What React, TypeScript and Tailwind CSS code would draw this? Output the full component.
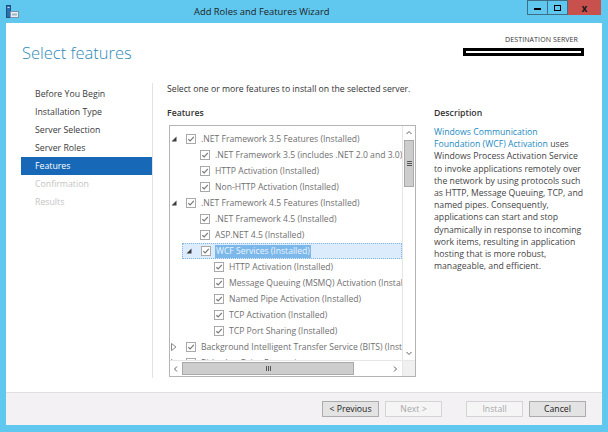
import React from 'react';

type Row = {
  level: number;
  label: string;
  expander?: 'open' | 'closed';
  checked?: boolean;
  selected?: boolean;
};

const rows: Row[] = [
  {level: 0, label: '.NET Framework 3.5 Features (Installed)', expander: 'open'},
  {level: 1, label: '.NET Framework 3.5 (includes .NET 2.0 and 3.0) (Installed)'},
  {level: 1, label: 'HTTP Activation (Installed)'},
  {level: 1, label: 'Non-HTTP Activation (Installed)'},
  {level: 0, label: '.NET Framework 4.5 Features (Installed)', expander: 'open'},
  {level: 1, label: '.NET Framework 4.5 (Installed)'},
  {level: 1, label: 'ASP.NET 4.5 (Installed)'},
  {level: 1, label: 'WCF Services (Installed)', expander: 'open', selected: true},
  {level: 2, label: 'HTTP Activation (Installed)'},
  {level: 2, label: 'Message Queuing (MSMQ) Activation (Installed)'},
  {level: 2, label: 'Named Pipe Activation (Installed)'},
  {level: 2, label: 'TCP Activation (Installed)'},
  {level: 2, label: 'TCP Port Sharing (Installed)'},
  {level: 0, label: 'Background Intelligent Transfer Service (BITS) (Installed)', expander: 'closed'},
  {level: 0, label: 'BitLocker Drive Encryption', expander: 'closed', checked: false},
];

const steps = [
  {label: 'Before You Begin', state: 'done'},
  {label: 'Installation Type', state: 'done'},
  {label: 'Server Selection', state: 'done'},
  {label: 'Server Roles', state: 'done'},
  {label: 'Features', state: 'active'},
  {label: 'Confirmation', state: 'off'},
  {label: 'Results', state: 'off'},
];

function Check({checked = true}: {checked?: boolean}) {
  return (
    <svg width="10" height="10" viewBox="0 0 10 10" className="shrink-0" aria-hidden="true">
      <rect x="0.5" y="0.5" width="9" height="9" fill="#fff" stroke="#a9a9a9" />
      {checked && (
        <polyline points="2.3 5.2 4.2 7 7.8 2.8" fill="none" stroke="#7b7b7b" strokeWidth="1.2" />
      )}
    </svg>
  );
}

function Expander({state}: {state?: 'open' | 'closed'}) {
  return (
    <div className="w-[16px] h-[16px] flex items-center pl-[1px] shrink-0">
      {state === 'open' && (
        <svg width="6" height="6" viewBox="0 0 6 6" aria-hidden="true">
          <polygon points="5.5 0.5 5.5 5.5 0.5 5.5" fill="#3c3c3c" />
        </svg>
      )}
      {state === 'closed' && (
        <svg width="6" height="8" viewBox="0 0 6 8" aria-hidden="true">
          <polygon points="0.5 0.5 5 4 0.5 7.5" fill="none" stroke="#8a8a8a" />
        </svg>
      )}
    </div>
  );
}

function Arrow({dir}: {dir: 'up' | 'down' | 'left' | 'right'}) {
  const pts = {
    up: '1.5 5 4 2.5 6.5 5',
    down: '1.5 3 4 5.5 6.5 3',
    left: '5 1.5 2.5 4 5 6.5',
    right: '3 1.5 5.5 4 3 6.5',
  }[dir];
  return (
    <svg width="8" height="8" viewBox="0 0 8 8" aria-hidden="true">
      <polyline points={pts} fill="none" stroke="#606060" strokeWidth="1" />
    </svg>
  );
}

function WinButton({
  label,
  disabled,
  className = '',
}: {
  label: string;
  disabled?: boolean;
  className?: string;
}) {
  return (
    <button
      type="button"
      className={
        disabled
          ? `w-[57px] h-[16px] border border-[#d4d4d4] bg-[#f5f5f5] text-[#a8a8a8] text-[8.7px] leading-[14px] ${className}`
          : `w-[57px] h-[16px] border border-[#acacac] bg-[#e3e3e3] text-[#222] text-[8.7px] leading-[14px] ${className}`
      }
    >
      {label}
    </button>
  );
}

export default function App() {
  return (
    <div className="w-[608px] h-[432px] bg-[#60c7ee] flex flex-col font-['Open_Sans',sans-serif] overflow-hidden">
      {/* Title bar */}
      <div className="flex h-[23px] shrink-0">
        <div className="w-[194px] pl-[6px] pt-[5px]">
          <svg width="13" height="13" viewBox="0 0 13 13" aria-hidden="true">
            <rect x="0.5" y="0.5" width="4" height="12" fill="#2a6fb0" stroke="#1b4f84" />
            <rect x="1.5" y="2" width="2" height="1" fill="#cfe6fa" />
            <rect x="4.5" y="6.5" width="8" height="6" fill="#e8eef3" stroke="#7b93a8" />
            <rect x="6" y="8.5" width="5" height="2" fill="#9fb6c8" />
          </svg>
        </div>
        <div className="pt-[5px] text-[9.4px] leading-[13px] text-[#1e1e1e]">
          Add Roles and Features Wizard
        </div>
        <div className="flex-1" />
        <div className="flex h-[15px] mr-[7px]">
          <div className="w-[21px] h-[15px] border border-[#3f6f86] flex items-end justify-center pb-[4px]">
            <div className="w-[7px] h-[2px] bg-black" />
          </div>
          <div className="w-[20px] h-[15px] border border-l-0 border-[#3f6f86] flex items-center justify-center">
            <div className="w-[7px] h-[6px] border-[1.5px] border-black" />
          </div>
          <div className="w-[33px] h-[15px] bg-[#c8514e] flex items-center justify-center text-[10px] font-bold leading-none text-[#1a1a1a]">
            x
          </div>
        </div>
      </div>

      {/* Client area */}
      <div className="flex-1 mx-[6px] mb-[7px] bg-white flex flex-col">
        {/* Header */}
        <div className="h-[60px] shrink-0 flex justify-between">
          <div className="pl-[16px] pt-[19px] text-[16.5px] leading-[22px] font-light text-[#2f8bb8]">
            Select features
          </div>
          <div className="flex flex-col items-end pr-[18px] pt-[12px]">
            <div className="text-[7px] leading-[10px] text-[#333] mr-[6px] tracking-[0.1px]">
              DESTINATION SERVER
            </div>
            <div className="mt-[3px] w-[121px] h-[8px] bg-black flex items-center px-[3px]">
              <div className="h-[2px] w-full bg-white" />
            </div>
          </div>
        </div>

        {/* Body */}
        <div className="h-[309px] shrink-0 flex">
          {/* Steps */}
          <div className="ml-[15px] w-[131px] pt-[2px] flex flex-col">
            {steps.map((s) => (
              <div
                key={s.label}
                className={
                  s.state === 'active'
                    ? 'h-[18px] pl-[14px] text-[8.75px] leading-[18px] bg-[#1769b8] text-white'
                    : s.state === 'off'
                      ? 'h-[18px] pl-[14px] text-[8.75px] leading-[18px] text-[#c4c4c4]'
                      : 'h-[18px] pl-[14px] text-[8.75px] leading-[18px] text-[#3a3a3a]'
                }
              >
                {s.label}
              </div>
            ))}
          </div>
          <div className="w-[1px] h-[295px] bg-[#e2e2e2]" />

          {/* Main */}
          <div className="pl-[14px] flex flex-col">
            <div className="h-[12px] text-[8.7px] leading-[12px] text-[#333]">
              Select one or more features to install on the selected server.
            </div>
            <div className="flex mt-[12px]">
              {/* Features tree */}
              <div className="flex flex-col">
                <div className="h-[12px] text-[8.7px] leading-[12px] font-semibold text-[#333]">
                  Features
                </div>
                <div className="mt-[6px] ml-[2px] w-[247px] h-[252px] border border-[#b4b4b4] flex flex-col">
                  <div className="flex h-[234px]">
                    <div className="w-[232px] overflow-hidden pt-[5px]">
                      {rows.map((r, i) => (
                        <div key={i} className="flex h-[16px]">
                          <div
                            className={
                              r.level === 0 ? 'w-0 shrink-0' : r.level === 1 ? 'w-[14px] shrink-0' : 'w-[28px] shrink-0'
                            }
                          />
                          <div
                            className={
                              r.selected
                                ? 'flex-1 flex items-center ml-[-2px] pl-[2px] bg-[#dcecfc] border border-dotted border-[#7fb3e0] min-w-0'
                                : 'flex-1 flex items-center min-w-0'
                            }
                          >
                            <Expander state={r.expander} />
                            <Check checked={r.checked !== false} />
                            <span
                              className={
                                r.selected
                                  ? 'ml-[4px] px-[1px] text-[8.6px] leading-[13px] whitespace-nowrap bg-[#7db8ea] text-[#e9f4fd]'
                                  : 'ml-[5px] text-[8.6px] leading-[13px] whitespace-nowrap text-[#707070]'
                              }
                            >
                              {r.label}
                            </span>
                          </div>
                        </div>
                      ))}
                    </div>
                    {/* Vertical scrollbar */}
                    <div className="w-[13px] flex flex-col border-l border-[#e6e6e6]">
                      <div className="h-[14px] flex items-center justify-center">
                        <Arrow dir="up" />
                      </div>
                      <div className="h-[47px] mx-[1px] bg-[#cdcdcd] border border-[#a9a9a9] flex flex-col items-center justify-center gap-[1px]">
                        <div className="w-[5px] h-[1px] bg-[#555]" />
                        <div className="w-[5px] h-[1px] bg-[#555]" />
                        <div className="w-[5px] h-[1px] bg-[#555]" />
                      </div>
                      <div className="flex-1" />
                      <div className="h-[14px] flex items-center justify-center">
                        <Arrow dir="down" />
                      </div>
                    </div>
                  </div>
                  {/* Horizontal scrollbar */}
                  <div className="flex h-[16px] border-t border-[#e6e6e6]">
                    <div className="w-[12px] flex items-center justify-center">
                      <Arrow dir="left" />
                    </div>
                    <div className="w-[172px] my-[1px] bg-[#cdcdcd] border border-[#a9a9a9] flex items-center justify-center gap-[1px]">
                      <div className="w-[1px] h-[5px] bg-[#555]" />
                      <div className="w-[1px] h-[5px] bg-[#555]" />
                      <div className="w-[1px] h-[5px] bg-[#555]" />
                    </div>
                    <div className="flex-1" />
                    <div className="w-[14px] flex items-center justify-center">
                      <Arrow dir="right" />
                    </div>
                    <div className="w-[13px] bg-[#f0f0f0] border-l border-[#e6e6e6]" />
                  </div>
                </div>
              </div>

              {/* Description */}
              <div className="ml-[18px] w-[150px] flex flex-col">
                <div className="h-[12px] text-[8.7px] leading-[12px] font-semibold text-[#333]">
                  Description
                </div>
                <p className="mt-[7px] text-[8.7px] leading-[12.2px] text-[#444]">
                  <span className="text-[#1d8ac3]">Windows Communication Foundation (WCF) Activation</span> uses
                  Windows Process Activation Service to invoke applications remotely over the network by using
                  protocols such as HTTP, Message Queuing, TCP, and named pipes. Consequently, applications can
                  start and stop dynamically in response to incoming work items, resulting in application hosting
                  that is more robust, manageable, and efficient.
                </p>
              </div>
            </div>
          </div>
        </div>

        {/* Footer */}
        <div className="flex-1 border-t border-[#e0e0e0] bg-[#f4f1f5] flex justify-end items-start pt-[8px] pr-[16px]">
          <WinButton label="< Previous" />
          <WinButton label="Next >" disabled className="ml-[6px]" />
          <WinButton label="Install" disabled className="ml-[24px]" />
          <WinButton label="Cancel" className="ml-[6px]" />
        </div>
      </div>
    </div>
  );
}
